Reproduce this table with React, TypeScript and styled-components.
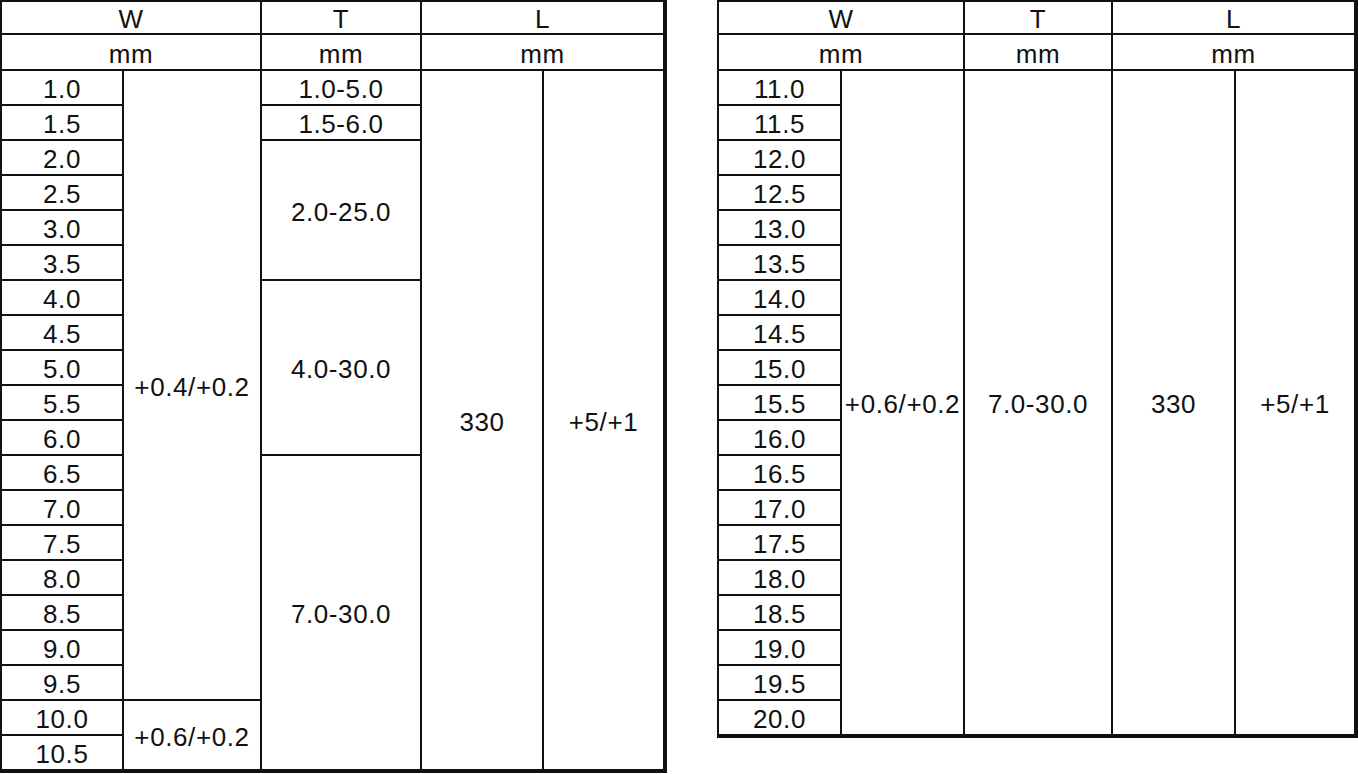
import React from "react"
import styled, { createGlobalStyle } from "styled-components"

const GlobalStyle = createGlobalStyle`
  html, body {
    margin: 0;
    padding: 0;
    background: #fff;
    overflow: hidden;
  }
  body {
    font-family: "Liberation Sans", Arial, sans-serif;
    color: #111;
  }
`

type CellDef = {
  text: string
  c: number
  r: number
  cs?: number
  rs?: number
}

const Page = styled.div`
  display: flex;
  align-items: flex-start;
  gap: 50px;
`

const Grid = styled.div<{ $cols: string; $rows: number }>`
  display: grid;
  grid-template-columns: ${(p) => p.$cols};
  grid-template-rows: 33px 36px repeat(${(p) => p.$rows}, 35px);
  border-top: 2px solid #111;
  border-left: 2px solid #111;
  border-right: 2px solid #111;
  border-bottom: 2px solid #111;
`

const Cell = styled.div<{ $c: number; $r: number; $cs: number; $rs: number }>`
  grid-column: ${(p) => p.$c} / span ${(p) => p.$cs};
  grid-row: ${(p) => p.$r} / span ${(p) => p.$rs};
  box-sizing: border-box;
  border-right: 2px solid #111;
  border-bottom: 2px solid #111;
  display: flex;
  align-items: center;
  justify-content: center;
  padding-top: 3px;
  font-size: 26px;
  line-height: 1;
  white-space: nowrap;
  letter-spacing: 0.6px;
`

const leftW = [
  "1.0", "1.5", "2.0", "2.5", "3.0", "3.5", "4.0", "4.5", "5.0", "5.5",
  "6.0", "6.5", "7.0", "7.5", "8.0", "8.5", "9.0", "9.5", "10.0", "10.5",
]

const rightW = [
  "11.0", "11.5", "12.0", "12.5", "13.0", "13.5", "14.0", "14.5", "15.0", "15.5",
  "16.0", "16.5", "17.0", "17.5", "18.0", "18.5", "19.0", "19.5", "20.0",
]

const header: CellDef[] = [
  { text: "W", c: 1, r: 1, cs: 2 },
  { text: "T", c: 3, r: 1 },
  { text: "L", c: 4, r: 1, cs: 2 },
  { text: "mm", c: 1, r: 2, cs: 2 },
  { text: "mm", c: 3, r: 2 },
  { text: "mm", c: 4, r: 2, cs: 2 },
]

const leftCells: CellDef[] = [
  ...header,
  ...leftW.map((w, i) => ({ text: w, c: 1, r: 3 + i })),
  { text: "+0.4/+0.2", c: 2, r: 3, rs: 18 },
  { text: "+0.6/+0.2", c: 2, r: 21, rs: 2 },
  { text: "1.0-5.0", c: 3, r: 3 },
  { text: "1.5-6.0", c: 3, r: 4 },
  { text: "2.0-25.0", c: 3, r: 5, rs: 4 },
  { text: "4.0-30.0", c: 3, r: 9, rs: 5 },
  { text: "7.0-30.0", c: 3, r: 14, rs: 9 },
  { text: "330", c: 4, r: 3, rs: 20 },
  { text: "+5/+1", c: 5, r: 3, rs: 20 },
]

const rightCells: CellDef[] = [
  ...header,
  ...rightW.map((w, i) => ({ text: w, c: 1, r: 3 + i })),
  { text: "+0.6/+0.2", c: 2, r: 3, rs: 19 },
  { text: "7.0-30.0", c: 3, r: 3, rs: 19 },
  { text: "330", c: 4, r: 3, rs: 19 },
  { text: "+5/+1", c: 5, r: 3, rs: 19 },
]

const SpecTable: React.FC<{ cols: string; rows: number; cells: CellDef[] }> = ({ cols, rows, cells }) => {
  return (
    <Grid $cols={cols} $rows={rows}>
      {cells.map((cell, i) => (
        <Cell key={i} $c={cell.c} $r={cell.r} $cs={cell.cs ?? 1} $rs={cell.rs ?? 1}>
          {cell.text}
        </Cell>
      ))}
    </Grid>
  )
}

export default function App() {
  return (
    <>
      <GlobalStyle />
      <Page>
        <SpecTable cols="122px 138px 160px 122px 121px" rows={20} cells={leftCells} />
        <SpecTable cols="123px 123px 148px 123px 120px" rows={19} cells={rightCells} />
      </Page>
    </>
  )
}
